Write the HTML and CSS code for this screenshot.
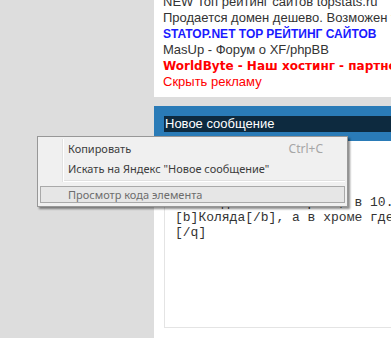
FILE: index.html
```html
<!DOCTYPE html>
<html>
<head>
    <meta charset="UTF-8">
    <title>Новое сообщение</title>
    <link rel="stylesheet" href="styles.css">
</head>
<body>
<div class="wrap">
    <div class="side"></div>
    <div class="main">
        <div class="ads">
            <ul class="adList">
                <li>NEW Топ рейтинг сайтов topstats.ru</li>
                <li>Продается домен дешево. Возможен торг</li>
                <li class="blue">STATOP.NET TOP РЕЙТИНГ САЙТОВ</li>
                <li>MasUp - Форум о XF/phpBB</li>
                <li class="red">WorldByte - Наш хостинг - партнер</li>
                <li class="hide">Скрыть рекламу</li>
            </ul>
        </div>
        <div class="dialog">
            <h2 class="dlgTitle"><span>Новое сообщение</span></h2>
            <div class="dlgBody">
                <div class="editor">[q=Коляда]
Имя выделяется жирным, в 10.5 Опере
[b]Коляда[/b], а в хроме где-то нет
[/q]</div>
            </div>
        </div>
    </div>
</div>

<!--контекстное меню поверх страницы-->
<div class="ctx">
    <div class="ctxMain">
        <div class="ctxGutter"></div>
        <ul class="ctxItems">
            <li><span>Копировать</span><span class="key">Ctrl+C</span></li>
            <li><span>Искать на Яндекс "Новое сообщение"</span></li>
            <li class="sep"></li>
        </ul>
    </div>
    <div class="ctxHover">Просмотр кода элемента</div>
</div>
</body>
</html>
```

FILE: styles.css
```css
* {
    margin: 0;
    padding: 0;
    box-sizing: border-box;
}

ul, li {
    list-style: none;
}

html, body {
    height: 100%;
    overflow: hidden;
}

body {
    background: #dddddd;
    font-family: "Liberation Sans", Arial, sans-serif;
}

.wrap {
    display: flex;
    height: 100%;
}

.side {
    width: 154px;
    flex: none;
}

.main {
    flex: 1;
    display: flex;
    flex-direction: column;
    gap: 9px;
    min-width: 0;
}

/*блок рекламы*/
.ads {
    height: 97px;
    background: #fff;
    padding-left: 9px;
    overflow: hidden;
    flex: none;
}

.adList {
    margin-top: -6px;
}

.adList li {
    height: 16px;
    line-height: 16px;
    font-size: 13px;
    color: #333;
    white-space: nowrap;
}

.adList li.blue {
    color: #1a1aff;
    font-weight: bold;
    font-size: 12px;
}

.adList li.red {
    color: #ff0000;
    font-weight: bold;
    font-family: "DejaVu Sans", Verdana, sans-serif;
    font-size: 12px;
}

.adList li.hide {
    color: #ff0000;
}

/*окно нового сообщения*/
.dialog {
    flex: 1;
    display: flex;
    flex-direction: column;
}

.dlgTitle {
    height: 35px;
    padding: 10px 0 0 10px;
    background: #2a7bb7;
    flex: none;
}

.dlgTitle span {
    display: block;
    height: 16px;
    line-height: 16px;
    padding-left: 1px;
    background: #0d2a3f;
    color: #fff;
    font-size: 13px;
    font-weight: normal;
    white-space: nowrap;
}

.dlgBody {
    flex: 1;
    display: flex;
    background: #fff;
    padding: 5px 0 10px 10px;
}

.editor {
    flex: 1;
    border: 1px solid #e4e4e4;
    border-top: 0;
    border-right: 0;
    padding: 34px 0 0 10px;
    font-family: "Liberation Mono", "Courier New", monospace;
    font-size: 13px;
    line-height: 15px;
    color: #333;
    white-space: pre;
    overflow: hidden;
}

/*контекстное меню*/
.ctx {
    position: absolute;
    left: 37px;
    top: 136px;
    width: 311px;
    padding: 2px 2px 3px 2px;
    background: #f0f0f0;
    border: 1px solid #979797;
    box-shadow: 2px 2px 2px rgba(0, 0, 0, 0.45);
    font-family: "Noto Sans", "Open Sans", sans-serif;
    font-size: 11px;
    color: #3c3c3c;
}

.ctxMain {
    display: flex;
}

.ctxGutter {
    width: 23px;
    border-right: 1px solid #e2e2e2;
    box-shadow: 1px 0 0 #fff;
    margin-bottom: 4px;
}

.ctxItems {
    flex: 1;
}

.ctxItems li {
    display: flex;
    justify-content: space-between;
    height: 20px;
    line-height: 20px;
    padding: 0 22px 0 5px;
    white-space: nowrap;
}

.ctxItems li .key {
    color: #a6a6a6;
    font-size: 12px;
}

.ctxItems li.sep {
    height: 2px;
    margin: 1px 0 4px 1px;
    border-top: 1px solid #e0e0e0;
    border-bottom: 1px solid #fff;
}

.ctxHover {
    height: 17px;
    line-height: 15px;
    padding-left: 27px;
    background: #e6e6e6;
    border: 1px solid #a9a9a9;
    color: #6d6d6d;
    white-space: nowrap;
}
```
